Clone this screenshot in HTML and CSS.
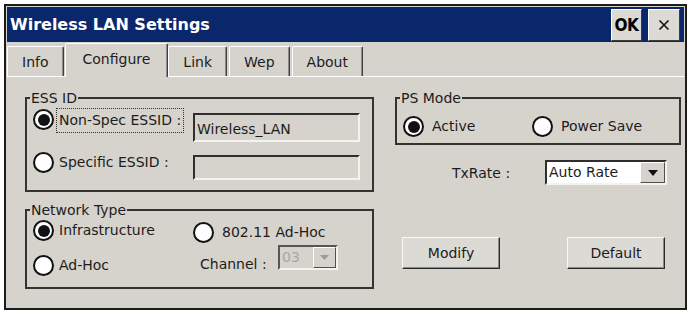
FILE: index.html
```html
<!DOCTYPE html>
<html>
<head>
<meta charset="utf-8">
<link rel="stylesheet" href="styles.css">
</head>
<body>
<div class="window">
  <div class="titlebar">
    <span class="title">Wireless LAN Settings</span>
    <span class="tbtn ok">OK</span>
    <span class="tbtn close"><svg width="12" height="12" viewBox="0 0 12 12"><path d="M1.5 1.5L10.5 10.5M10.5 1.5L1.5 10.5" stroke="#111" stroke-width="1.6" fill="none"/></svg></span>
  </div>
  <div class="tabs">
    <div class="tab">Info</div>
    <div class="tab sel">Configure</div>
    <div class="tab">Link</div>
    <div class="tab">Wep</div>
    <div class="tab">About</div>
  </div>
  <div class="panel">
    <div class="col left">
      <fieldset class="group ess">
        <legend>ESS ID</legend>
        <div class="ess-grid">
          <span class="radio on r1"></span>
          <span class="lbl r1"><span class="focus">Non-Spec ESSID :</span></span>
          <span class="field f1">Wireless_LAN</span>
          <span class="radio r2"></span>
          <span class="lbl r2">Specific ESSID :</span>
          <span class="field f2"></span>
        </div>
      </fieldset>
      <fieldset class="group net">
        <legend>Network Type</legend>
        <div class="net-grid">
          <span class="radio on n1"></span>
          <span class="lbl n1">Infrastructure</span>
          <span class="opt n1"><span class="radio"></span><span class="lbl">802.11 Ad-Hoc</span></span>
          <span class="radio n2"></span>
          <span class="lbl n2">Ad-Hoc</span>
          <span class="chan"><span class="chan-lbl">Channel :</span>
            <span class="select disabled"><span class="sel-text">03</span><span class="drop"><svg width="9" height="5" viewBox="0 0 9 5"><path d="M0 0H9L4.5 5Z" fill="#9a9a9a"/></svg></span></span>
          </span>
        </div>
      </fieldset>
    </div>
    <div class="col right">
      <fieldset class="group ps">
        <legend>PS Mode</legend>
        <div class="ps-row">
          <span class="opt ps-a"><span class="radio on"></span><span class="lbl">Active</span></span>
          <span class="opt"><span class="radio"></span><span class="lbl">Power Save</span></span>
        </div>
      </fieldset>
      <div class="tx-row">
        <span class="tx-lbl">TxRate :</span>
        <span class="select tx"><span class="sel-text">Auto Rate</span><span class="drop"><svg width="10" height="6" viewBox="0 0 10 6"><path d="M0 0H10L5 6Z" fill="#111"/></svg></span></span>
      </div>
      <div class="btn-row">
        <span class="btn">Modify</span>
        <span class="btn">Default</span>
      </div>
    </div>
  </div>
</div>
</body>
</html>
```
FILE: styles.css
```css
* { box-sizing: border-box; }
body {
  margin: 0;
  background: #fff;
  font-family: "DejaVu Sans", "Liberation Sans", sans-serif;
  font-size: 14px;
  color: #1c1c1c;
}
.window {
  margin: 4px 0 0 4px;
  width: 683px;
  height: 306px;
  border: 2px solid #1c1c1c;
  padding: 1px;
  background: #d6d3cd;
  display: flex;
  flex-direction: column;
}
.titlebar {
  height: 35px;
  background: #0b276b;
  display: flex;
  align-items: center;
  padding: 0 4px 0 3px;
}
.title {
  flex: 1;
  color: #fff;
  font-weight: bold;
  font-size: 16px;
}
.tbtn {
  height: 32px;
  background: #dcdad4;
  border: 1px solid;
  border-color: #fff #3c3c3c #3c3c3c #fff;
  display: flex;
  align-items: center;
  justify-content: center;
  color: #000;
}
.ok {
  width: 31px;
  font-family: "DejaVu Sans Condensed", "DejaVu Sans", sans-serif;
  font-weight: bold;
  font-size: 17px;
  letter-spacing: -0.5px;
}
.close { width: 32px; margin-left: 6px; }
.tabs {
  height: 35px;
  display: flex;
  align-items: flex-end;
  border-bottom: 1px solid #fff;
}
.tab {
  height: 30px;
  padding: 0 14px;
  margin-right: 2px;
  display: flex;
  align-items: center;
  border: 1px solid;
  border-bottom: none;
  border-color: #fff #404040 transparent #fff;
  box-shadow: inset -1px 0 #8a8a8a;
  border-radius: 2px 2px 0 0;
}
.tab.sel {
  height: 34px;
  margin: 0 0 -1px -1px;
  padding: 0 17px 3px;
  background: #d6d3cd;
}
.panel {
  flex: 1;
  display: flex;
  padding: 13px 0 0 18px;
}
.col { display: flex; flex-direction: column; }
.left { width: 349px; }
.right { width: 286px; margin-left: 21px; }
.group {
  margin: 0;
  padding: 0 6px;
  border: 2px solid #333;
  min-width: 0;
}
legend {
  padding: 0 1px;
  margin-left: -3px;
  line-height: 16px;
}
.radio {
  width: 21px;
  height: 21px;
  border-radius: 50%;
  border: 2px solid #111;
  background: #fff;
  display: inline-flex;
  align-items: center;
  justify-content: center;
  flex: none;
}
.radio.on::after {
  content: "";
  width: 12px;
  height: 12px;
  border-radius: 50%;
  background: #111;
}
.lbl { line-height: 21px; white-space: nowrap; }
.ess-grid {
  display: grid;
  grid-template-columns: 20px 140px 167px;
  grid-template-rows: 40px 38px;
  padding-bottom: 6px;
}
.ess-grid .lbl { padding-left: 6px; }
.ess-grid .r1 { margin-top: 3px; }
.ess-grid .r2 { margin-top: 6px; }
.focus {
  display: inline-block;
  outline: 1px dotted #333;
  outline-offset: 0;
  padding: 0 2px;
  margin-left: -2px;
  line-height: 23px;
  margin-top: 0;
}
.field {
  background: #d6d3cd;
  border: 2px solid;
  border-color: #2e2e2e #f4f3ef #f4f3ef #2e2e2e;
  padding: 3px 2px 0;
  line-height: 20px;
}
.f1 { height: 29px; margin-top: 7px; padding-top: 4px; }
.f2 { height: 25px; margin-top: 9px; }
.net { margin-top: 10px; }
.net-grid {
  display: grid;
  grid-template-columns: 20px 140px 160px;
  grid-template-rows: 26px 37px;
  padding-bottom: 6px;
}
.net-grid .lbl { padding-left: 6px; }
.net-grid .n1 { margin-top: 2px; }
.net-grid .n2 { margin-top: 11px; }
.opt { display: flex; align-items: center; }
.opt .lbl { padding-left: 8px; }
.chan { display: flex; align-items: flex-start; padding-left: 7px; }
.chan-lbl { margin-top: 10px; line-height: 21px; width: 78px; }
.select {
  display: flex;
  height: 25px;
  background: #fff;
  border: 2px solid;
  border-color: #2e2e2e #f4f3ef #f4f3ef #2e2e2e;
}
.select.disabled {
  margin-top: 1px;
  width: 60px;
  background: #d6d3cd;
  color: #a8a6a0;
  border-color: #555 #f4f3ef #f4f3ef #555;
}
.sel-text { flex: 1; padding-left: 2px; line-height: 21px; }
.drop {
  width: 25px;
  background: #d6d3cd;
  border: 1px solid;
  border-color: #fff #505050 #505050 #fff;
  display: flex;
  align-items: center;
  justify-content: center;
}
.disabled .drop { width: 23px; }
.ps-row {
  display: flex;
  height: 31px;
  padding-top: 10px;
  align-items: center;
  margin-bottom: 6px;
}
.ps-a { width: 129px; }
.tx-row {
  display: flex;
  align-items: center;
  margin-top: 15px;
  height: 25px;
  padding-left: 57px;
}
.tx-lbl { flex: 1; }
.select.tx { width: 122px; margin-right: 14px; }
.btn-row {
  display: flex;
  justify-content: space-between;
  margin-top: 52px;
  padding: 0 16px 0 7px;
}
.btn {
  width: 98px;
  height: 32px;
  display: flex;
  align-items: center;
  justify-content: center;
  background: #dcdad4;
  border: 1px solid;
  border-color: #f8f8f6 #2a2a2a #2a2a2a #f8f8f6;
  box-shadow: inset -1px -1px #8a8a8a;
}
```
